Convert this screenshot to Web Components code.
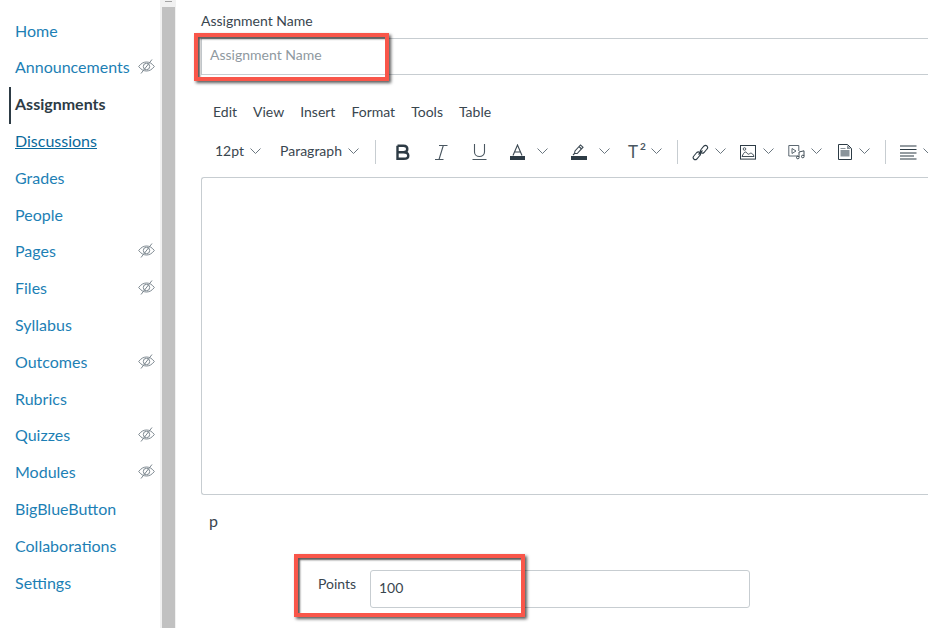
<!DOCTYPE html>
<html><head><meta charset="utf-8"><style>
html,body{margin:0;padding:0;background:#fff;overflow:hidden}
body{width:928px;height:628px;font-family:Lato,sans-serif;color:#2d3b45}
</style></head><body>
<canvas-page>
<course-nav slot="nav">
<nav-item>Home</nav-item>
<nav-item hidden-eye>Announcements</nav-item>
<nav-item active>Assignments</nav-item>
<nav-item hover>Discussions</nav-item>
<nav-item>Grades</nav-item>
<nav-item>People</nav-item>
<nav-item hidden-eye>Pages</nav-item>
<nav-item hidden-eye>Files</nav-item>
<nav-item>Syllabus</nav-item>
<nav-item hidden-eye>Outcomes</nav-item>
<nav-item>Rubrics</nav-item>
<nav-item hidden-eye>Quizzes</nav-item>
<nav-item hidden-eye>Modules</nav-item>
<nav-item>BigBlueButton</nav-item>
<nav-item>Collaborations</nav-item>
<nav-item>Settings</nav-item>
</course-nav>
<assignment-form slot="main"></assignment-form>
</canvas-page>
<script>
function def(name, html){
  customElements.define(name, class extends HTMLElement{
    constructor(){super();this.attachShadow({mode:'open'}).innerHTML=html;}
  });
}
def('canvas-page',`<style>
:host{display:flex;width:928px;height:628px;overflow:hidden}
.bar{width:16px;flex:none;background:#f1f1f1;display:flex;flex-direction:column;align-items:center}
.top{height:7px;width:100%;background:#f1f1f1;display:flex;justify-content:center}
.top i{display:block;width:7px;height:1px;background:#a3a3a3;margin-top:1px}
.thumb{width:13px;flex:1;background:#c1c1c1;margin-left:1px}
::slotted([slot=nav]){flex:none}
::slotted([slot=main]){flex:1;min-width:0}
</style><slot name="nav"></slot><div class="bar"><div class="top"><i></i></div><div class="thumb"></div></div><slot name="main"></slot>`);

def('course-nav',`<style>
:host{display:flex;flex-direction:column;width:160px;height:628px;padding-top:12.2px;box-sizing:border-box}
</style><slot></slot>`);

def('nav-item',`<style>
:host{display:flex;align-items:center;height:36.8px;padding-left:15px;box-sizing:border-box;position:relative;font:16px/20px Lato,sans-serif;color:#1d7fb5}
:host([active]){color:#2d3b45;font-weight:700}
:host([active])::before{content:"";position:absolute;left:9px;top:1px;bottom:-1px;width:2px;background:#2d3b45}
:host([hover]){color:#0a6a9c;text-decoration:underline}
svg{position:absolute;left:138px;top:50%;margin-top:-9px;display:none}
:host([hidden-eye]) svg{display:block}
</style><slot></slot>
<svg width="17" height="17" viewBox="0 0 17 17" fill="none" stroke="#7c878f" stroke-width="1"><path d="M.7 8.500C3 5.400 5.600 4 8.500 4s5.500 1.400 7.800 4.500C14 11.600 11.400 13 8.500 13S3 11.600.7 8.500Z"/><circle cx="8.500" cy="8.500" r="3.200"/><path d="M14 1.500 3 15.500"/></svg>`);

def('menu-item',`<style>:host{display:block;font:14px/20px Lato,sans-serif;color:#39464f}</style><slot></slot>`);

def('tb-chevron',`<style>:host{display:inline-flex;align-items:center;margin-bottom:2px}</style>
<svg width="11" height="6" viewBox="0 0 11 6" fill="none" stroke="#6b7780" stroke-width="1"><path d="M.5.500 5.500 5.500 10.500.500"/></svg>`);

def('tb-sep',`<style>:host{display:block;width:1px;height:24px;background:#c7cdd1;flex:none}</style>`);

def('call-out',`<style>:host{position:absolute;display:block;box-sizing:border-box;border:4px solid #f9564a;box-shadow:2px 2px 3px rgba(0,0,0,.65),inset 2px 2px 2px rgba(0,0,0,.65);pointer-events:none}</style>`);

def('assignment-form',`<style>
:host{display:block;position:relative;height:628px;overflow:hidden;font:14px/20px Lato,sans-serif;color:#39464f}
.wrap{padding:11px 0 0 25px;width:800px;box-sizing:border-box}
label{display:block;font-size:14px;line-height:20px;height:20px}
.name{height:37px;margin-top:7px;box-sizing:border-box;border:1px solid #c7cdd1;border-right:0;padding:0 0 0 8px;font-size:14px;line-height:32px;color:#8f999f;width:752px}
.menu{display:flex;gap:16px;margin:27px 0 0 12px;height:20px}
.tools{display:flex;align-items:center;height:24px;margin-top:18px;margin-left:14px;white-space:nowrap;font-size:14px}
.tools svg{display:block;flex:none}
.tools .t{margin-bottom:2px}
.editor{height:318px;margin-top:13px;box-sizing:border-box;border:1px solid #c7cdd1;border-right:0;border-radius:3px 0 0 3px;width:752px}
.tag{font-size:16px;margin:16px 0 0 8px;line-height:20px}
.pts{display:flex;align-items:center;margin:39px 0 0 117px;}
.pts span{width:52px;font-size:14px;margin-top:-10px}
.pts div{width:380px;height:38px;box-sizing:border-box;border:1px solid #c7cdd1;border-radius:3px;padding-left:8px;font-size:14px;line-height:34px}
.sup{position:relative;display:block;width:17px;height:18px;color:#4a5761;font-size:17px;line-height:18px}
.sup b{position:absolute;left:12px;top:-2px;font-size:10px;line-height:10px}
</style>
<div class="wrap">
<label>Assignment Name</label>
<div class="name">Assignment Name</div>
<div class="menu"><menu-item>Edit</menu-item><menu-item>View</menu-item><menu-item>Insert</menu-item><menu-item>Format</menu-item><menu-item>Tools</menu-item><menu-item>Table</menu-item></div>
<div class="tools">
<span class="t">12pt</span><tb-chevron style="margin-left:6px"></tb-chevron>
<span class="t" style="margin-left:19px">Paragraph</span><tb-chevron style="margin-left:6px"></tb-chevron>
<tb-sep style="margin-left:16px"></tb-sep>
<svg style="margin-left:19px" width="16" height="16" viewBox="0 0 16 16" fill="none" stroke="#2d3b45" stroke-width="2.400"><path d="M2.500 1.700H8.500C11 1.700 12.300 3 12.300 5S11 8.200 8.500 8.200H2.500M8.500 8.200C11.700 8.200 13.300 9.700 13.300 11.700S11.700 14.800 8.800 14.800H2.500V1.700"/></svg>
<svg style="margin-left:23px" width="14" height="17" viewBox="0 0 14 17" fill="none" stroke="#4a5761" stroke-width="1.100"><path d="M5 1.500h8.500M1 15.500h8.500M9.300 1.500 5 15.500"/></svg>
<svg style="margin-left:24px" width="15" height="18" viewBox="0 0 15 18" fill="none" stroke="#4a5761" stroke-width="1.100"><path d="M2.500 1v8c0 6 10 6 10 0V1M.5 16.500h14"/></svg>
<svg style="margin-left:23px" width="15" height="16" viewBox="0 0 15 16"><path fill="none" stroke="#3b4852" stroke-width="1.100" d="M3 11.500 7.500 1l4.500 10.500M4.300 8h6.400"/><rect y="12" width="15" height="4" fill="#2d3b45"/></svg>
<tb-chevron style="margin-left:12px"></tb-chevron>
<svg style="margin-left:23px" width="16" height="16" viewBox="0 0 16 16"><path fill="none" stroke="#3b4852" stroke-width="1.100" d="M3.500 9.500 4 7 9.500 1 12 3.200 6.200 9.500ZM2 11l1.500-1.500M8 2.500 10.500 5"/><rect y="12" width="16" height="4" fill="#2d3b45"/></svg>
<tb-chevron style="margin-left:12px"></tb-chevron>
<span class="sup" style="margin-left:18px">T<b>2</b></span>
<tb-chevron style="margin-left:6px"></tb-chevron>
<tb-sep style="margin-left:15px"></tb-sep>
<svg style="margin-left:14px" width="17" height="17" viewBox="0 0 17 17" fill="none" stroke="#2d3b45" stroke-width="1.100"><path d="M9 5.500 12 2a2.200 2.200 0 0 1 3 0 2.200 2.200 0 0 1 0 3L12 8.500a2.200 2.200 0 0 1-3 0 2.200 2.200 0 0 1 0-3ZM4.800 8.500 1.800 12a2.200 2.200 0 0 0 0 3 2.200 2.200 0 0 0 3 0l3-3.500a2.200 2.200 0 0 0 0-3 2.200 2.200 0 0 0-3 0ZM6.500 10.500l4-4"/></svg>
<tb-chevron style="margin-left:6px"></tb-chevron>
<svg style="margin-left:14px" width="16" height="15" viewBox="0 0 16 15" fill="none" stroke="#2d3b45"><rect x=".5" y=".5" width="15" height="13.600"/><circle cx="4.500" cy="4" r="1.300" stroke-width=".8"/><path stroke-width=".9" d="M2 11.500h12c-.5-2-2-3.500-3.500-3.300-1 .2-1.300 1.200-2.200 1C7 9 7 7 5.500 7 4 7 3 9.500 2 11.500Z"/></svg>
<tb-chevron style="margin-left:7px"></tb-chevron>
<svg style="margin-left:14px" width="17" height="16" viewBox="0 0 17 16" fill="none" stroke="#4a5761" stroke-width=".9"><path d="M10 12H.8V1.500h10V7"/><path d="M4 4.500 8 7 4 9.500Z"/><path stroke="#2d3b45" d="M11 13V8l5-1.200V12"/><circle cx="9.800" cy="13.500" r="1.300" stroke="#2d3b45"/><circle cx="14.800" cy="12.500" r="1.300" stroke="#2d3b45"/></svg>
<tb-chevron style="margin-left:6px"></tb-chevron>
<svg style="margin-left:16px" width="14" height="16" viewBox="0 0 14 16"><path fill="none" stroke="#2d3b45" d="M.5.500h9l4 4v11H.5Z"/><path fill="#8a949b" d="M2.500 4h5v1h-5ZM2.500 6h9v6.500h-9Z"/><path fill="#8a949b" d="M9 1l4 4H9Z"/></svg>
<tb-chevron style="margin-left:7px"></tb-chevron>
<tb-sep style="margin-left:15px"></tb-sep>
<svg style="margin-left:14px" width="17" height="15" viewBox="0 0 17 15" stroke="#2d3b45" stroke-width="1.100"><path d="M0 1h16.500M0 4.500h16.500M0 8h16.500M0 11h14M0 14h16.500" fill="none"/></svg>
<tb-chevron style="margin-left:6px"></tb-chevron>
</div>
<div class="editor"></div>
<div class="tag">p</div>
<div class="pts"><span>Points</span><div>100</div></div>
</div>
<call-out style="left:18px;top:33px;width:195px;height:48px"></call-out>
<call-out style="left:118px;top:554px;width:231px;height:63px"></call-out>`);
</script>
</body></html>
